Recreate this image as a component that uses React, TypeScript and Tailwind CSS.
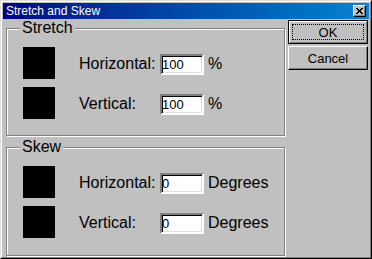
import React from "react";

const font = { fontFamily: '"Liberation Sans", Arial, sans-serif' };

function Row({ label, value, unit }: { label: string; value: string; unit: string }) {
  return (
    <div className="flex items-start h-[32px]">
      <div className="w-[32px] h-[32px] bg-black shrink-0" />
      <span className="ml-[24px] w-[81px] mt-[8px] text-[16px] leading-[18px] text-black">{label}</span>
      <input
        readOnly
        value={value}
        className="mt-[7px] w-[44px] h-[21px] bg-white border-2 border-t-[#808080] border-l-[#808080] border-b-white border-r-white shadow-[inset_1px_1px_0_#000,inset_-1px_-1px_0_#dfdfdf] text-[13px] leading-[16px] p-0 text-black outline-none"
        style={font}
      />
      <span className="ml-[4px] mt-[8px] text-[16px] leading-[18px] text-black">{unit}</span>
    </div>
  );
}

function Group({ title, h, children }: { title: string; h: string; children: React.ReactNode }) {
  return (
    <div
      className={`relative w-[279px] ${h} border border-[#808080] shadow-[inset_1px_1px_0_#fff,1px_1px_0_#fff] pt-[18px] pl-[16px] flex flex-col gap-[8px]`}
    >
      <span className="absolute left-[13px] top-[-10px] bg-[#c0c0c0] px-[2px] text-[16px] leading-[18px] text-black">
        {title}
      </span>
      {children}
    </div>
  );
}

export default function App() {
  return (
    <div className="w-[372px] h-[259px] bg-[#c0c0c0] border border-t-[#dfdfdf] border-l-[#dfdfdf] border-b-black border-r-black" style={font}>
      <div className="w-full h-full border border-t-white border-l-white border-b-[#808080] border-r-[#808080] p-[1px] flex flex-col">
        <div className="h-[16px] shrink-0 bg-gradient-to-r from-[#000080] to-[#1084d0] flex items-center justify-between pl-[3px] pr-[3px]">
          <span className="text-white text-[12px] leading-[16px]">Stretch and Skew</span>
          <div className="w-[13px] h-[12px] bg-[#c0c0c0] border border-t-white border-l-white border-b-black border-r-black shadow-[inset_-1px_-1px_0_#808080] flex items-center justify-center">
            <svg width="7" height="6" viewBox="0 0 7 6" shapeRendering="crispEdges">
              <rect x="0" y="0" width="2" height="1" fill="#000" />
              <rect x="5" y="0" width="2" height="1" fill="#000" />
              <rect x="1" y="1" width="2" height="1" fill="#000" />
              <rect x="4" y="1" width="2" height="1" fill="#000" />
              <rect x="2" y="2" width="3" height="1" fill="#000" />
              <rect x="2" y="3" width="3" height="1" fill="#000" />
              <rect x="1" y="4" width="2" height="1" fill="#000" />
              <rect x="4" y="4" width="2" height="1" fill="#000" />
              <rect x="0" y="5" width="2" height="1" fill="#000" />
              <rect x="5" y="5" width="2" height="1" fill="#000" />
            </svg>
          </div>
        </div>
        <div className="flex flex-1 pl-[3px]">
          <div className="flex flex-col pt-[9px] gap-[11px]">
            <Group title="Stretch" h="h-[108px]">
              <Row label="Horizontal:" value="100" unit="%" />
              <Row label="Vertical:" value="100" unit="%" />
            </Group>
            <Group title="Skew" h="h-[109px]">
              <Row label="Horizontal:" value="0" unit="Degrees" />
              <Row label="Vertical:" value="0" unit="Degrees" />
            </Group>
          </div>
          <div className="ml-[3px] mt-[1px] flex flex-col gap-[2px]">
            <button className="w-[80px] h-[24px] bg-[#c0c0c0] border border-black shadow-[inset_1px_1px_0_#fff,inset_-1px_-1px_0_#808080] flex p-0">
              <span className="flex-1 m-[3px] border border-dotted border-black flex items-center justify-center text-[13px] leading-[15px] text-black">
                OK
              </span>
            </button>
            <button className="w-[80px] h-[24px] bg-[#c0c0c0] border border-t-white border-l-white border-b-black border-r-black shadow-[inset_-1px_-1px_0_#808080] flex items-center justify-center p-0 text-[13px] leading-[15px] text-black">
              Cancel
            </button>
          </div>
        </div>
      </div>
    </div>
  );
}
